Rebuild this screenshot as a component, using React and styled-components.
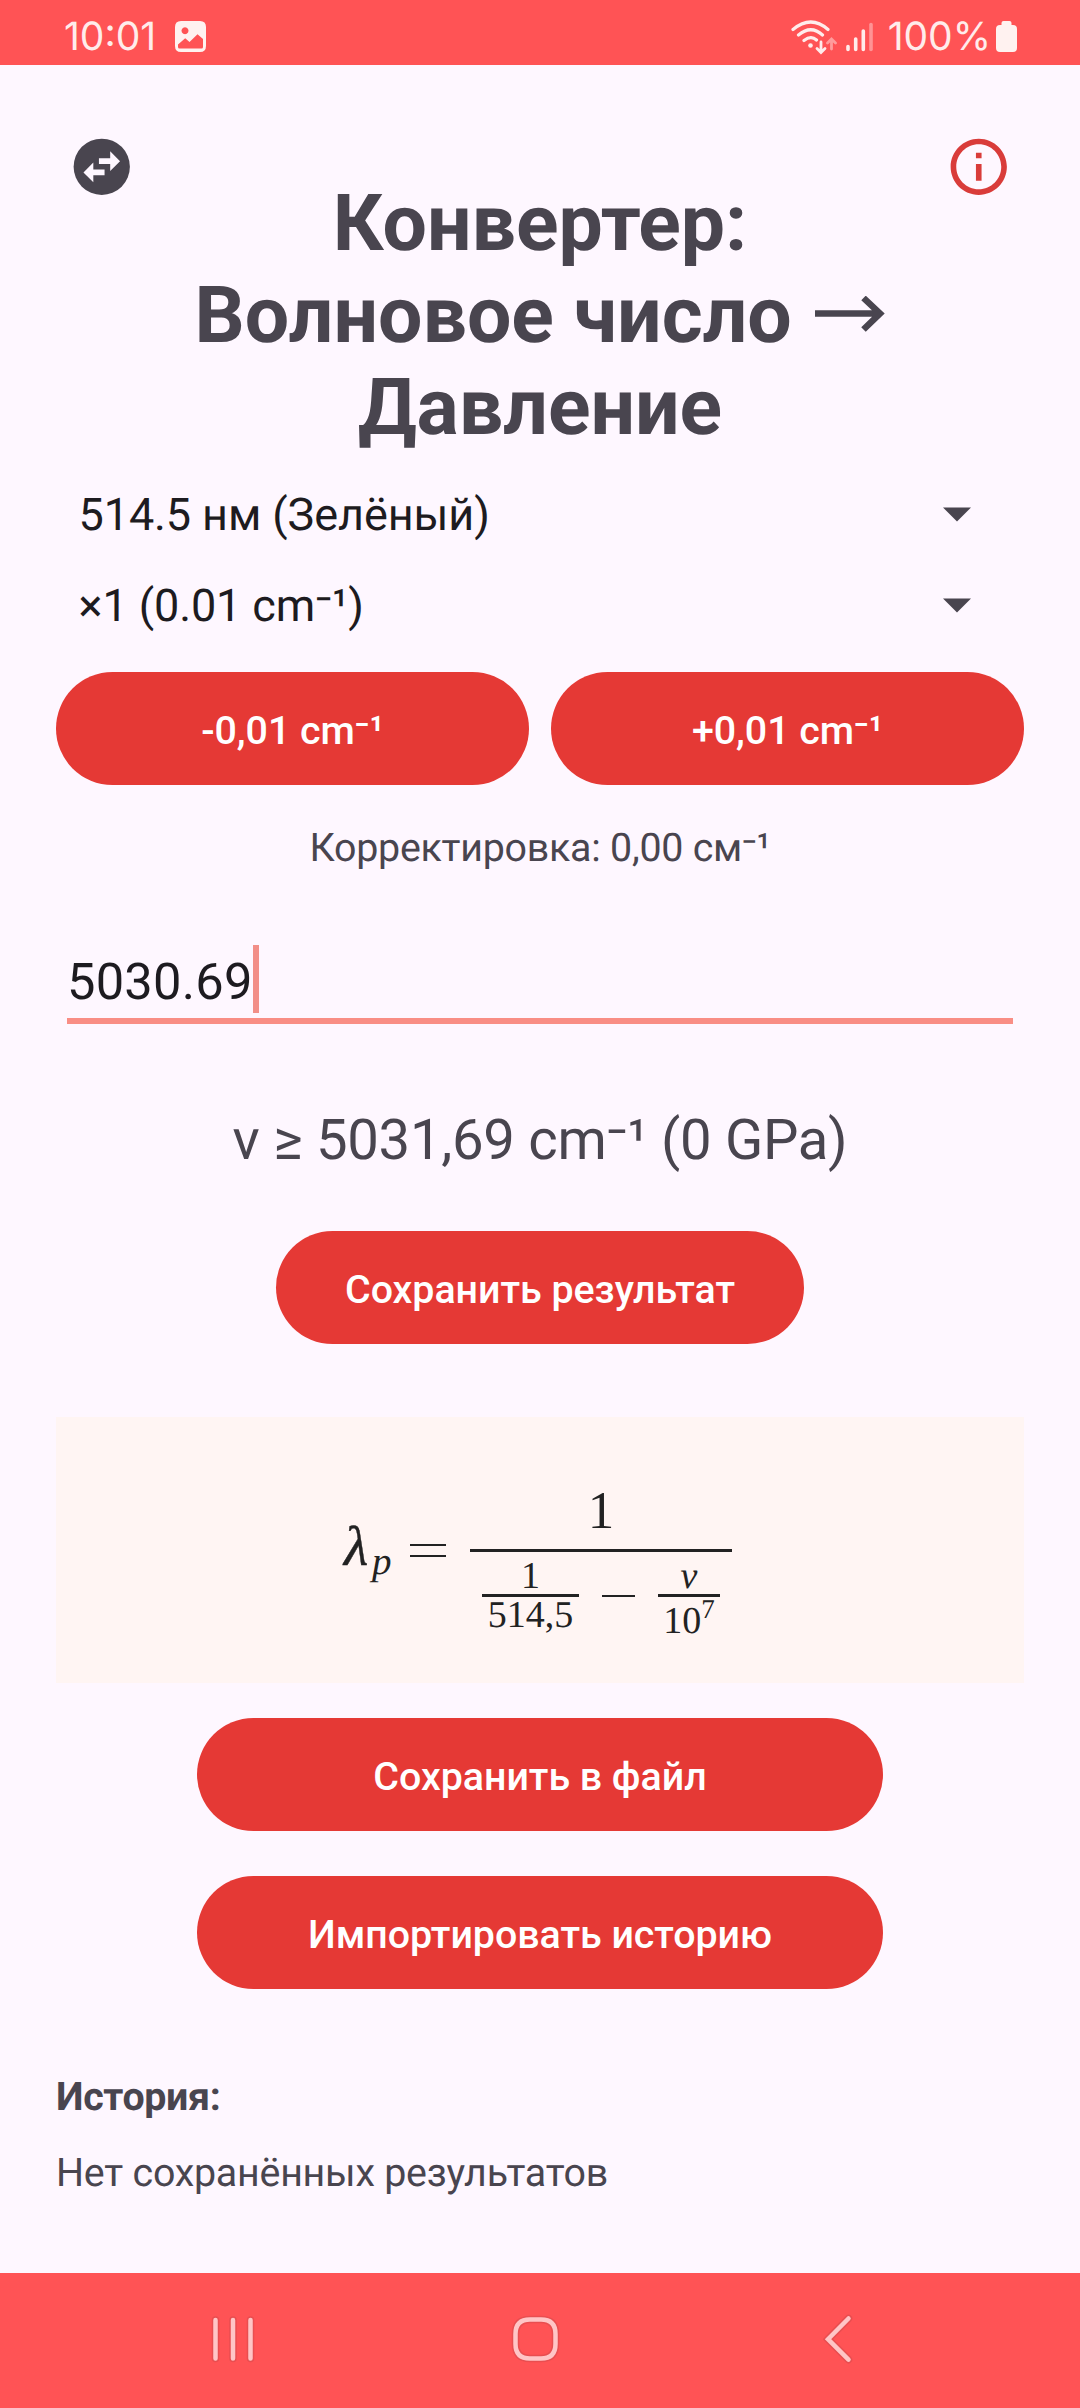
import React from "react";
import styled, { createGlobalStyle } from "styled-components";

const GlobalStyle = createGlobalStyle`
  *, *::before, *::after { box-sizing: border-box; }
  body { margin: 0; background: #fef7ff; }
`;

const Screen = styled.div`
  width: 1080px;
  height: 2408px;
  display: flex;
  flex-direction: column;
  overflow: hidden;
  background: #fef7ff;
  color: #49454f;
  font-family: Roboto, "Noto Sans", sans-serif;
  text-rendering: geometricPrecision;
`;

const StatusBar = styled.div`
  height: 65px;
  flex: none;
  display: flex;
  align-items: center;
  justify-content: space-between;
  padding: 8px 63px 0 64px;
  background: #ff5355;
  color: #ffeceb;
`;

const StatusGroup = styled.div`
  display: flex;
  align-items: center;
  height: 40px;
`;

const StatusText = styled.span`
  font-family: Inter, sans-serif;
  font-size: 39px;
  line-height: 40px;
  letter-spacing: 0;
  margin-left: ${(p) => p.$gap || 0}px;
`;

const StatusIcon = styled.svg`
  display: block;
  flex: none;
  margin-left: ${(p) => p.$gap || 0}px;
`;

const Content = styled.main`
  flex: 1;
  display: flex;
  flex-direction: column;
  padding: 68px 56px 0;
`;

const Header = styled.header`
  display: grid;
  grid-template-columns: 67.5px 1fr 67.5px;
  padding: 0 11.5px;
  height: 336px;
`;

const IconButton = styled.button`
  width: 67.5px;
  height: 67.5px;
  padding: 0;
  border: 0;
  background: none;
  color: ${(p) => p.$color};
  svg { display: block; width: 67.5px; height: 67.5px; }
`;

const Title = styled.h1`
  margin: 45px 0 0;
  font-size: 78.75px;
  line-height: 92px;
  font-weight: 700;
  text-align: center;
  white-space: nowrap;
`;

const ArrowGlyph = styled.svg`
  display: inline-block;
  margin-left: 4px;
  vertical-align: 10px;
`;

const Select = styled.div`
  height: 91.3px;
  display: flex;
  align-items: center;
  justify-content: space-between;
  padding: 0 53px 0 22.5px;
  color: #1d1b20;
  font-size: 45px;
  line-height: 54px;
  letter-spacing: -0.1px;
`;

const ButtonRow = styled.div`
  display: flex;
  gap: 22px;
  margin-top: 20.4px;
`;

const Button = styled.button`
  height: 113px;
  width: ${(p) => p.$width || "auto"};
  flex: ${(p) => (p.$grow ? "1" : "none")};
  align-self: center;
  margin: ${(p) => p.$top || 0}px 0 0;
  padding: 4px 0 0;
  border: 0;
  border-radius: 57px;
  background: #e53935;
  color: #fff;
  font-family: inherit;
  font-size: 39.375px;
  font-weight: 500;
  letter-spacing: -0.03px;
`;

const Correction = styled.p`
  margin: 40.5px 0 0;
  font-size: 39.375px;
  line-height: 46px;
  letter-spacing: -0.25px;
  text-align: center;
`;

const Field = styled.div`
  display: flex;
  align-items: flex-end;
  height: 79px;
  margin: 73.5px 11px 0;
  border-bottom: 6px solid #f98e85;
  color: #1d1b20;
`;

const FieldValue = styled.span`
  font-size: 50.625px;
  line-height: 60px;
  letter-spacing: 0.22px;
  margin-bottom: 5px;
`;

const Caret = styled.span`
  width: 6px;
  height: 68px;
  margin: 0 0 5px 0.5px;
  background: #f28f88;
`;

const Result = styled.p`
  margin: 83px 0 0;
  font-size: 56.25px;
  line-height: 66px;
  letter-spacing: -0.3px;
  text-align: center;
`;

const FormulaCard = styled.section`
  display: flex;
  justify-content: center;
  height: 266px;
  margin-top: 73px;
  padding-top: 69px;
  background: #fff5f3;
  color: #222;
  font-family: "Liberation Serif", serif;
`;

const Formula = styled.div`
  display: flex;
  align-items: flex-start;
  width: 392px;
  height: 160px;
`;

const Lambda = styled.span`
  width: 28px;
  margin-top: 29px;
  font-size: 56px;
  line-height: 64px;
  font-style: italic;
  -webkit-text-stroke: 0.4px #222;
`;

const Subscript = styled.span`
  width: 38px;
  margin-top: 56px;
  font-size: 39px;
  line-height: 40px;
  font-style: italic;
`;

const Equals = styled.span`
  width: 36px;
  height: 13px;
  margin: 58px 24px 0 0;
  border-top: 2px solid #222;
  border-bottom: 2px solid #222;
`;

const Fraction = styled.div`
  display: flex;
  flex-direction: column;
  align-items: center;
  width: ${(p) => p.$width}px;
  margin-top: ${(p) => p.$top || 0}px;
`;

const Part = styled.span`
  display: block;
  height: ${(p) => p.$height}px;
  font-size: ${(p) => p.$size || 38}px;
  line-height: ${(p) => p.$line || p.$height}px;
  font-style: ${(p) => (p.$italic ? "italic" : "normal")};
  white-space: nowrap;
  sup {
    font-size: 27px;
    line-height: 0;
    vertical-align: 15px;
  }
`;

const Bar = styled.span`
  width: 100%;
  height: 3px;
  background: #222;
`;

const Denominator = styled.div`
  display: flex;
  width: 238px;
  justify-content: space-between;
`;

const Minus = styled.span`
  width: 33px;
  height: 2px;
  margin-top: 43px;
  background: #222;
`;

const HistoryTitle = styled.h2`
  margin: 85.5px 0 0;
  font-size: 39.375px;
  line-height: 46px;
  font-weight: 700;
  letter-spacing: -0.35px;
`;

const HistoryEmpty = styled.p`
  margin: 30px 0 0;
  font-size: 39.375px;
  line-height: 46px;
  letter-spacing: -0.23px;
`;

const NavBar = styled.nav`
  height: 135px;
  flex: none;
  display: flex;
  align-items: flex-start;
  padding: 38px 0 0 206px;
  background: #ff5355;
  svg { display: block; flex: none; }
  svg + svg { margin-left: 241px; }
`;

const Triangle = () => (
  <svg width="28" height="15" viewBox="0 0 28 15">
    <path d="M0 .5h28L14 14.5z" fill="#49454f" />
  </svg>
);

const NavIcon = ({ d }) => (
  <svg width="62" height="62" viewBox="0 0 62 62" fill="none" strokeLinecap="round">
    <path d={d} stroke="#e94e50" strokeWidth="7.5" />
    <path d={d} stroke="#ffc5c6" strokeWidth="4.5" />
  </svg>
);

export default function App() {
  return (
    <>
      <GlobalStyle />
      <Screen>
        <StatusBar>
          <StatusGroup>
            <StatusText>10:01</StatusText>
            <StatusIcon $gap={19} width="31" height="31" viewBox="0 0 31 31">
              <path
                fillRule="evenodd"
                fill="#fff2f0"
                d="M6 0h19q6 0 6 6v19q0 6-6 6H6q-6 0-6-6V6q0-6 6-6zM10 6.200a3.500 3.500 0 1 0 .01 0zM3 23.500v2.500q0 1.500 1.500 1.500h22q1.500 0 1.500-1.500v-8l-5.500-4.800L14.500 21l-4.300-3.700z"
              />
            </StatusIcon>
          </StatusGroup>
          <StatusGroup>
            <StatusIcon width="46" height="36" viewBox="0 0 46 36" fill="none" stroke="#ffeceb" strokeWidth="3.200" strokeLinecap="round">
              <path d="M2 10.500Q20 -4.500 37 10.500M7.500 16Q20 5.500 31.500 16M13 21.500Q20 16 25.500 21" />
              <circle cx="19.500" cy="26.500" r="2.300" fill="#ffeceb" stroke="none" />
              <path d="M30 23v9M26 29.500l4 4 4-4" strokeWidth="2.800" />
              <path d="M40.500 30v-9M36.500 24l4-4 4 4" strokeWidth="2.800" stroke="#ff9b9b" />
            </StatusIcon>
            <StatusIcon $gap={9} width="27" height="30" viewBox="0 0 27 30" strokeWidth="3.600" strokeLinecap="round">
              <path d="M2 24.500v3M9.700 17v10.500M17.300 9v18.500" stroke="#ffeceb" />
              <path d="M25 2.500v25" stroke="#ff9395" />
            </StatusIcon>
            <StatusText $gap={15}>100%</StatusText>
            <StatusIcon $gap={5} width="21" height="31" viewBox="0 0 21 31">
              <path d="M7.500 0h6q2 0 2 2v2H17q4 0 4 4v19q0 4-4 4H4q-4 0-4-4V8q0-4 4-4h1.500V2q0-2 2-2z" fill="#fff2f0" />
            </StatusIcon>
          </StatusGroup>
        </StatusBar>

        <Content>
          <Header>
            <IconButton $color="#49454f" aria-label="Поменять направление">
              <svg viewBox="0 0 24 24">
                <circle cx="12" cy="12" r="10" fill="currentColor" />
                <path d="M15 6.500l3.500 3.500-3.500 3.500V11h-4V9h4zM9 17.500L5.500 14 9 10.500V13h4v2H9z" fill="#fef7ff" />
              </svg>
            </IconButton>
            <Title>
              Конвертер:
              <br />
              Волновое число{" "}
              <ArrowGlyph width="70" height="36" viewBox="0 0 70 36" aria-label="→">
                <path d="M0 17.500H66M48.500 2L65 17.500 48.500 33.500" fill="none" stroke="#49454f" strokeWidth="6.500" />
              </ArrowGlyph>
              <br />
              Давление
            </Title>
            <IconButton $color="#d93c3a" aria-label="Информация">
              <svg viewBox="0 0 24 24" fill="currentColor">
                <path d="M11 7h2v2h-2zM11 11h2v6h-2zM12 2C6.480 2 2 6.480 2 12s4.480 10 10 10 10-4.480 10-10S17.520 2 12 2zm0 18c-4.410 0-8-3.590-8-8s3.590-8 8-8 8 3.590 8 8-3.590 8-8 8z" />
              </svg>
            </IconButton>
          </Header>

          <Select>
            514.5 нм (Зелёный)
            <Triangle />
          </Select>
          <Select>
            ×1 (0.01 cm⁻¹)
            <Triangle />
          </Select>

          <ButtonRow>
            <Button $grow>-0,01 cm⁻¹</Button>
            <Button $grow>+0,01 cm⁻¹</Button>
          </ButtonRow>

          <Correction>Корректировка: 0,00 см⁻¹</Correction>

          <Field>
            <FieldValue>5030.69</FieldValue>
            <Caret />
          </Field>

          <Result>v ≥ 5031,69 cm⁻¹ (0 GPa)</Result>

          <Button $width="528px" $top={58}>Сохранить результат</Button>

          <FormulaCard>
            <Formula>
              <Lambda>λ</Lambda>
              <Subscript>p</Subscript>
              <Equals />
              <Fraction $width={262}>
                <Part $size={53} $height={63} $line={51}>1</Part>
                <Bar />
                <Denominator>
                  <Fraction $width={97} $top={5}>
                    <Part $height={37} $line={38}>1</Part>
                    <Bar />
                    <Part $height={36} $line={37}>514,5</Part>
                  </Fraction>
                  <Minus />
                  <Fraction $width={62} $top={5}>
                    <Part $height={37} $line={38} $italic>ν</Part>
                    <Bar />
                    <Part $height={48} $line={49}>10<sup>7</sup></Part>
                  </Fraction>
                </Denominator>
              </Fraction>
            </Formula>
          </FormulaCard>

          <Button $width="686px" $top={35}>Сохранить в файл</Button>
          <Button $width="686px" $top={45}>Импортировать историю</Button>

          <HistoryTitle>История:</HistoryTitle>
          <HistoryEmpty>Нет сохранённых результатов</HistoryEmpty>
        </Content>

        <NavBar>
          <NavIcon d="M9.500 9v38.500M27 9v38.500M44.500 9v38.500" />
          <NavIcon d="M21 8.500h11q14.500 0 14.500 14.500v10q0 14.500-14.500 14.500H21q-14.500 0-14.500-14.500V23q0-14.500 14.500-14.500z" />
          <NavIcon d="M36.500 7.500L16 28.200l20.500 20.500" />
        </NavBar>
      </Screen>
    </>
  );
}
